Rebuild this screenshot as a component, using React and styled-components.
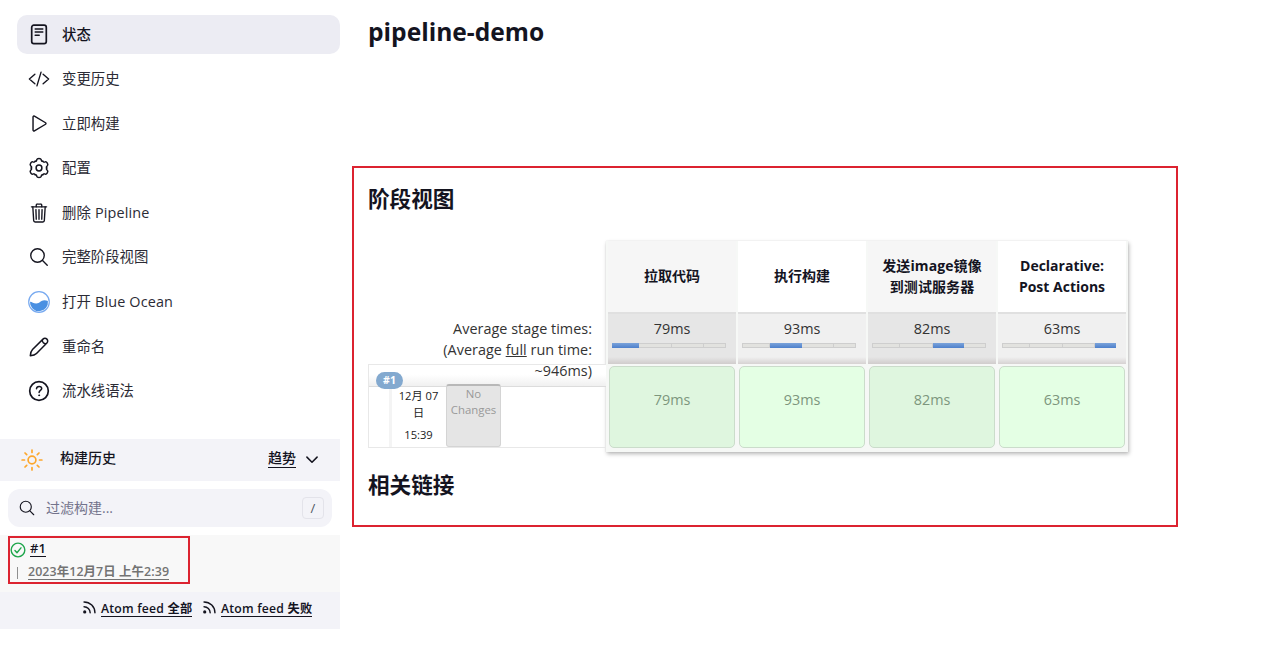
import React from 'react';
import styled, { createGlobalStyle } from 'styled-components';
import {
  IoCodeSlashOutline,
  IoPlayOutline,
  IoTrashOutline,
  IoSearchOutline,
} from 'react-icons/io5';

const Global = createGlobalStyle`
  *, *::before, *::after { box-sizing: border-box; }
  body {
    margin: 0;
    background: #fff;
    color: #14141f;
    font-family: "Open Sans", "Noto Sans CJK SC", sans-serif;
    font-size: 14.4px;
  }
  h1, h2, p { margin: 0; }
  svg { display: block; flex: none; }
`;

const Page = styled.div`
  display: flex;
  width: 1267px;
  height: 645px;
  overflow: hidden;
`;

/* Side panel */
const Side = styled.aside`
  width: 340px;
  flex: none;
  display: flex;
  flex-direction: column;
`;

const Tasks = styled.nav`
  display: flex;
  flex-direction: column;
  gap: 5.6px;
  height: 439px;
  padding: 15px 0 0 17px;
`;

const Task = styled.a`
  display: flex;
  align-items: center;
  height: 39px;
  flex: none;
  padding-left: 11px;
  border-radius: 10px;
  background: ${(p) => (p.$active ? '#ececf3' : 'transparent')};
  font-weight: ${(p) => (p.$active ? 500 : 400)};
  line-height: 20px;
  white-space: nowrap;
`;

const TaskLabel = styled.span`
  color: ${(p) => (p.$active ? '#14141f' : '#2b2b35')};
  letter-spacing: ${(p) => p.$track || 0}px;
`;

const TaskIcon = styled.span`
  width: 22px;
  height: 22px;
  margin-right: 12px;
  display: flex;
  align-items: center;
  justify-content: center;
`;

const HistoryHead = styled.div`
  display: flex;
  align-items: center;
  height: 42px;
  padding: 0 21px;
  background: #f3f3f8;
  font-weight: 500;
  font-size: 14px;
  line-height: 20px;
`;

const HistoryTitle = styled.span`
  flex: 1;
  margin: -4px 0 0 17px;
`;

const Trend = styled.a`
  margin: -3px 9px 0 0;
  line-height: 18px;
  border-bottom: 1px solid #14141f;
`;

const Search = styled.div`
  display: flex;
  align-items: center;
  height: 38px;
  margin: 8px 8px 8px;
  padding: 0 8px 0 10px;
  border-radius: 12px;
  background: #f3f3f8;
  color: #73738c;
`;

const Placeholder = styled.span`
  flex: 1;
  margin-left: 10px;
  font-size: 14px;
  line-height: 20px;
`;

const Key = styled.span`
  width: 22px;
  height: 22px;
  border: 1px solid #e3e3ea;
  border-radius: 4px;
  font-size: 13px;
  line-height: 20px;
  text-align: center;
  color: #4d545d;
`;

const Builds = styled.div`
  height: 57px;
  padding: 1px 0 0 8px;
  background: #f8f8f8;
`;

const BuildMark = styled.div`
  width: 182px;
  height: 48px;
  border: 2px solid #dc2330;
  font-weight: 600;
`;

const BuildTop = styled.div`
  display: flex;
  align-items: center;
  height: 22px;
  padding-top: 2px;
`;

const BuildNumber = styled.a`
  margin: -2px 0 0 4px;
  font-size: 13px;
  line-height: 15px;
  border-bottom: 1px solid #14141f;
`;

const BuildBottom = styled.div`
  display: flex;
  align-items: center;
  height: 23px;
  padding-left: 7px;
  color: #737373;
`;

const Tick = styled.span`
  width: 1px;
  height: 12px;
  margin-top: 3px;
  background: #8f8f8f;
`;

const BuildDate = styled.a`
  margin: 1px 0 0 10px;
  font-size: 12.4px;
  line-height: 15px;
  letter-spacing: 0.1px;
  white-space: nowrap;
  border-bottom: 1px solid #737373;
`;

const Feeds = styled.div`
  display: flex;
  align-items: center;
  height: 37px;
  padding: 0 0 4px 82px;
  background: #f3f3f8;
  font-size: 12.2px;
  font-weight: 600;
  letter-spacing: 0.22px;
`;

const Feed = styled.a`
  display: flex;
  align-items: center;
  width: 120px;
  white-space: nowrap;
  svg { margin: -2px 4px 0 0; }
  span { line-height: 15px; border-bottom: 1px solid #14141f; }
`;

/* Main panel */
const Main = styled.main`
  flex: 1;
  padding: 14px 0 0 12px;
`;

const Title = styled.h1`
  height: 152px;
  padding-left: 16px;
  font-size: 24.6px;
  font-weight: 700;
  line-height: 36px;
`;

const Frame = styled.section`
  width: 826px;
  height: 361px;
  padding: 16px 0 0 14px;
  border: 2px solid #dc2330;
`;

const Heading = styled.h2`
  height: 30px;
  font-size: 21.6px;
  font-weight: 700;
  line-height: 30px;
`;

const StageView = styled.div`
  display: flex;
  align-items: flex-start;
  margin: 26px 0 18px;
  height: 212px;
`;

const RunColumn = styled.div`
  width: 238px;
  flex: none;
`;

const Averages = styled.div`
  position: relative;
  z-index: 1;
  height: 124px;
  padding: 78px 14px 0 0;
  text-align: right;
  font-size: 14.4px;
  line-height: 21px;
  letter-spacing: 0.03px;
  color: #333;
  white-space: nowrap;
`;

const Run = styled.div`
  position: relative;
  height: 84px;
  border: 1px solid #e8e8e8;
  border-right: 0;
`;

const RunStrip = styled.div`
  height: 22px;
  border-bottom: 1px solid #dcdcdc;
  background: linear-gradient(#fff 45%, #f0f0f0);
`;

const Badge = styled.span`
  position: absolute;
  left: 7px;
  top: 7px;
  width: 27px;
  height: 17px;
  border-radius: 9px;
  background: #83a9cf;
  color: #fff;
  font-size: 10.5px;
  font-weight: 700;
  line-height: 16px;
  text-align: center;
`;

const RunBody = styled.div`
  display: flex;
  height: 60px;
  padding-left: 20px;
`;

const RunTime = styled.div`
  width: 57px;
  padding-right: 1px;
  border-left: 3px solid #f4f4f4;
  font-size: 11.2px;
  line-height: 17px;
  text-align: center;
  color: #222;
  p + p { margin-top: 5px; }
`;

const Changes = styled.div`
  width: 55px;
  height: 63px;
  margin-top: -3px;
  border: 1px solid #d4d4d4;
  border-top: 2px solid #b8b8b8;
  border-radius: 3px;
  background: #e5e5e5;
  color: #999;
  font-size: 11.4px;
  line-height: 16px;
  text-align: center;
`;

const Stages = styled.div`
  display: grid;
  grid-template-columns: repeat(4, 130px);
  width: 522px;
  height: 211px;
  margin-top: 1px;
  padding: 0 0 2px 2px;
  background: #f6f8f6;
  box-shadow: 1px 2px 4px rgba(0, 0, 0, 0.28), 0 0 1px rgba(0, 0, 0, 0.12);
`;

const Stage = styled.div`
  display: flex;
  flex-direction: column;
`;

const StageName = styled.div`
  height: 71px;
  margin-right: 2px;
  display: flex;
  align-items: center;
  justify-content: center;
  background: ${(p) => (p.$shade ? '#f6f6f6' : '#fff')};
  font-size: 14px;
  font-weight: 700;
  line-height: 21px;
  letter-spacing: ${(p) => p.$track || 0}px;
  padding-bottom: 2px;
  text-align: center;
  white-space: pre-line;
`;

const StageAverage = styled.div`
  height: 52px;
  margin-right: 2px;
  padding: 5px 9px 0 4px;
  border-top: 2px solid #e0e0e0;
  background: ${(p) =>
    p.$shade
      ? 'linear-gradient(#e6e6e6 86%, #d0cccc)'
      : 'linear-gradient(#f0f0f0 86%, #d6d2d2)'};
  text-align: center;
  font-size: 14.4px;
  line-height: 20px;
  color: #333;
`;

const AverageTime = styled.div`
  padding-left: 5px;
`;

const Meter = styled.div`
  display: flex;
  width: 114px;
  height: 5px;
  margin-top: 4px;
  outline: 1px solid #cecece;
  outline-offset: -1px;
  background: #e2e2df;
`;

const MeterPart = styled.span`
  flex: ${(p) => p.$size} 0 0;
  position: relative;
  border-right: ${(p) => (p.$on ? '0' : '1px solid #cecece')};
  background: ${(p) => (p.$on ? 'linear-gradient(#7ba3da, #4d80cc)' : 'transparent')};
`;

const Result = styled.div`
  height: 82px;
  margin: 2px 0 0 1px;
  width: 126px;
  border: 1px solid #cbdccb;
  border-radius: 5px;
  background: ${(p) => (p.$shade ? '#dff6df' : '#e4ffe4')};
  color: #7d967d;
  font-size: 14.4px;
  line-height: 66px;
  text-align: center;
`;

const Svg = ({ size = 22, children, ...rest }) => (
  <svg
    width={size}
    height={size}
    viewBox="0 0 22 22"
    fill="none"
    stroke="currentColor"
    strokeWidth="1.5"
    strokeLinecap="round"
    strokeLinejoin="round"
    {...rest}
  >
    {children}
  </svg>
);

const StatusIcon = () => (
  <Svg>
    <rect x="3.7" y="1.2" width="14.6" height="18.4" rx="2.2" strokeWidth="1.7" />
    <path d="M7.2 5h7.6M7.2 8.1h7.6M7.2 11.2h4" />
  </Svg>
);

const lobes = [0, 60, 120, 180, 240, 300];

const GearIcon = () => (
  <Svg>
    <circle cx="11" cy="11" r="2.9" />
    {lobes.map((angle) => (
      <path
        key={angle}
        transform={`rotate(${angle} 11 11)`}
        d="M7.1 4.25C8.2 4.7 8.6 3.5 8.8 2.6 9 1.7 9.7 1.4 11 1.4s2 .3 2.2 1.2c.2.9.6 2.1 1.7 1.65"
      />
    ))}
  </Svg>
);

const OceanIcon = () => (
  <Svg stroke="none">
    <circle cx="11" cy="11" r="10.3" fill="#fff" stroke="#78aaf0" strokeWidth="1.2" />
    <path
      d="M2 10.7c2.2.2 3.6 1.9 6.3 1.8 3.6-.2 4.4-3.3 8-3.3 1.4 0 2.5.4 3.6.9A9 9 0 1 1 2 10.7z"
      fill="#4a90e2"
    />
  </Svg>
);

const PencilIcon = () => (
  <Svg>
    <path d="M2.3 19.8c.2-3.1.8-4.9 2.2-6.3L15 3.1a2.75 2.75 0 0 1 3.9 3.9L8.5 17.5c-1.4 1.4-3.2 2-6.2 2.3zM14.3 3.9c-.2 2.2 1.6 4 3.8 3.8" />
  </Svg>
);

const HelpIcon = () => (
  <Svg>
    <circle cx="11" cy="11" r="9.3" strokeWidth="1.7" />
    <path d="M8.5 8.7c.1-1.5 1.2-2.3 2.6-2.3s2.6.9 2.6 2.2c0 1.8-2.6 1.9-2.6 3.9" />
    <circle cx="11.1" cy="15.3" r="0.5" fill="currentColor" strokeWidth="1" />
  </Svg>
);

const SunIcon = () => (
  <Svg stroke="#fda72c" strokeWidth="1.7">
    <circle cx="11" cy="11" r="3.9" />
    <path d="M11 1.1v2.4M11 18.5v2.4M1.1 11h2.4M18.5 11h2.4M4 4l1.7 1.7M16.3 16.3L18 18M4 18l1.7-1.7M16.3 5.7L18 4" />
  </Svg>
);

const SuccessIcon = () => (
  <Svg size={16} stroke="#1ea64b" strokeWidth="1.9">
    <circle cx="11" cy="11" r="9.4" />
    <path d="M6.8 11.8l2.8 3 5.5-6.8" />
  </Svg>
);

const ChevronIcon = () => (
  <Svg size={14} strokeWidth="2.4">
    <path d="M3 6.5l8 8 8-8" />
  </Svg>
);

const FeedIcon = () => (
  <Svg size={15} strokeWidth="2.1">
    <circle cx="4" cy="17.5" r="1.3" fill="currentColor" />
    <path d="M3 9.8a9 9 0 0 1 9 9M3 2.8a16 16 0 0 1 16 16" />
  </Svg>
);

const tasks = [
  { icon: <StatusIcon />, label: '状态', active: true },
  { icon: <IoCodeSlashOutline size={22} />, label: '变更历史' },
  { icon: <IoPlayOutline size={23} />, label: '立即构建' },
  { icon: <GearIcon />, label: '配置' },
  { icon: <IoTrashOutline size={22} />, label: '删除 Pipeline', track: 0.15 },
  { icon: <IoSearchOutline size={22} />, label: '完整阶段视图' },
  { icon: <OceanIcon />, label: '打开 Blue Ocean', track: 0.15 },
  { icon: <PencilIcon />, label: '重命名' },
  { icon: <HelpIcon />, label: '流水线语法' },
];

const stages = [
  { name: '拉取代码', time: '79ms' },
  { name: '执行构建', time: '93ms' },
  { name: '发送image镜像\n到测试服务器', time: '82ms', track: 0.1 },
  { name: 'Declarative:\nPost Actions', time: '63ms' },
];

const meterSizes = [28, 33, 31, 22];

export default function App() {
  return (
    <Page>
      <Global />
      <Side>
        <Tasks>
          {tasks.map((t) => (
            <Task key={t.label} $active={t.active}>
              <TaskIcon>{t.icon}</TaskIcon>
              <TaskLabel $active={t.active} $track={t.track}>
                {t.label}
              </TaskLabel>
            </Task>
          ))}
        </Tasks>
        <HistoryHead>
          <SunIcon />
          <HistoryTitle>构建历史</HistoryTitle>
          <Trend>趋势</Trend>
          <ChevronIcon />
        </HistoryHead>
        <Search>
          <IoSearchOutline size={18} color="#14141f" />
          <Placeholder>过滤构建...</Placeholder>
          <Key>/</Key>
        </Search>
        <Builds>
          <BuildMark>
            <BuildTop>
              <SuccessIcon />
              <BuildNumber>#1</BuildNumber>
            </BuildTop>
            <BuildBottom>
              <Tick />
              <BuildDate>2023年12月7日 上午2:39</BuildDate>
            </BuildBottom>
          </BuildMark>
        </Builds>
        <Feeds>
          <Feed>
            <FeedIcon />
            <span>Atom feed 全部</span>
          </Feed>
          <Feed>
            <FeedIcon />
            <span>Atom feed 失败</span>
          </Feed>
        </Feeds>
      </Side>
      <Main>
        <Title>pipeline-demo</Title>
        <Frame>
          <Heading>阶段视图</Heading>
          <StageView>
            <RunColumn>
              <Averages>
                Average stage times:
                <br />
                (Average <u>full</u> run time:
                <br />
                ~946ms)
              </Averages>
              <Run>
                <RunStrip />
                <Badge>#1</Badge>
                <RunBody>
                  <RunTime>
                    <p>
                      12月 07
                      <br />日
                    </p>
                    <p>15:39</p>
                  </RunTime>
                  <Changes>
                    No
                    <br />
                    Changes
                  </Changes>
                </RunBody>
              </Run>
            </RunColumn>
            <Stages>
              {stages.map((s, i) => (
                <Stage key={s.name}>
                  <StageName $shade={i % 2 === 0} $track={s.track}>
                    {s.name}
                  </StageName>
                  <StageAverage $shade={i % 2 === 0}>
                    <AverageTime>{s.time}</AverageTime>
                    <Meter>
                      {meterSizes.map((size, part) => (
                        <MeterPart key={part} $size={size} $on={part === i} />
                      ))}
                    </Meter>
                  </StageAverage>
                  <Result $shade={i % 2 === 0}>{s.time}</Result>
                </Stage>
              ))}
            </Stages>
          </StageView>
          <Heading>相关链接</Heading>
        </Frame>
      </Main>
    </Page>
  );
}
